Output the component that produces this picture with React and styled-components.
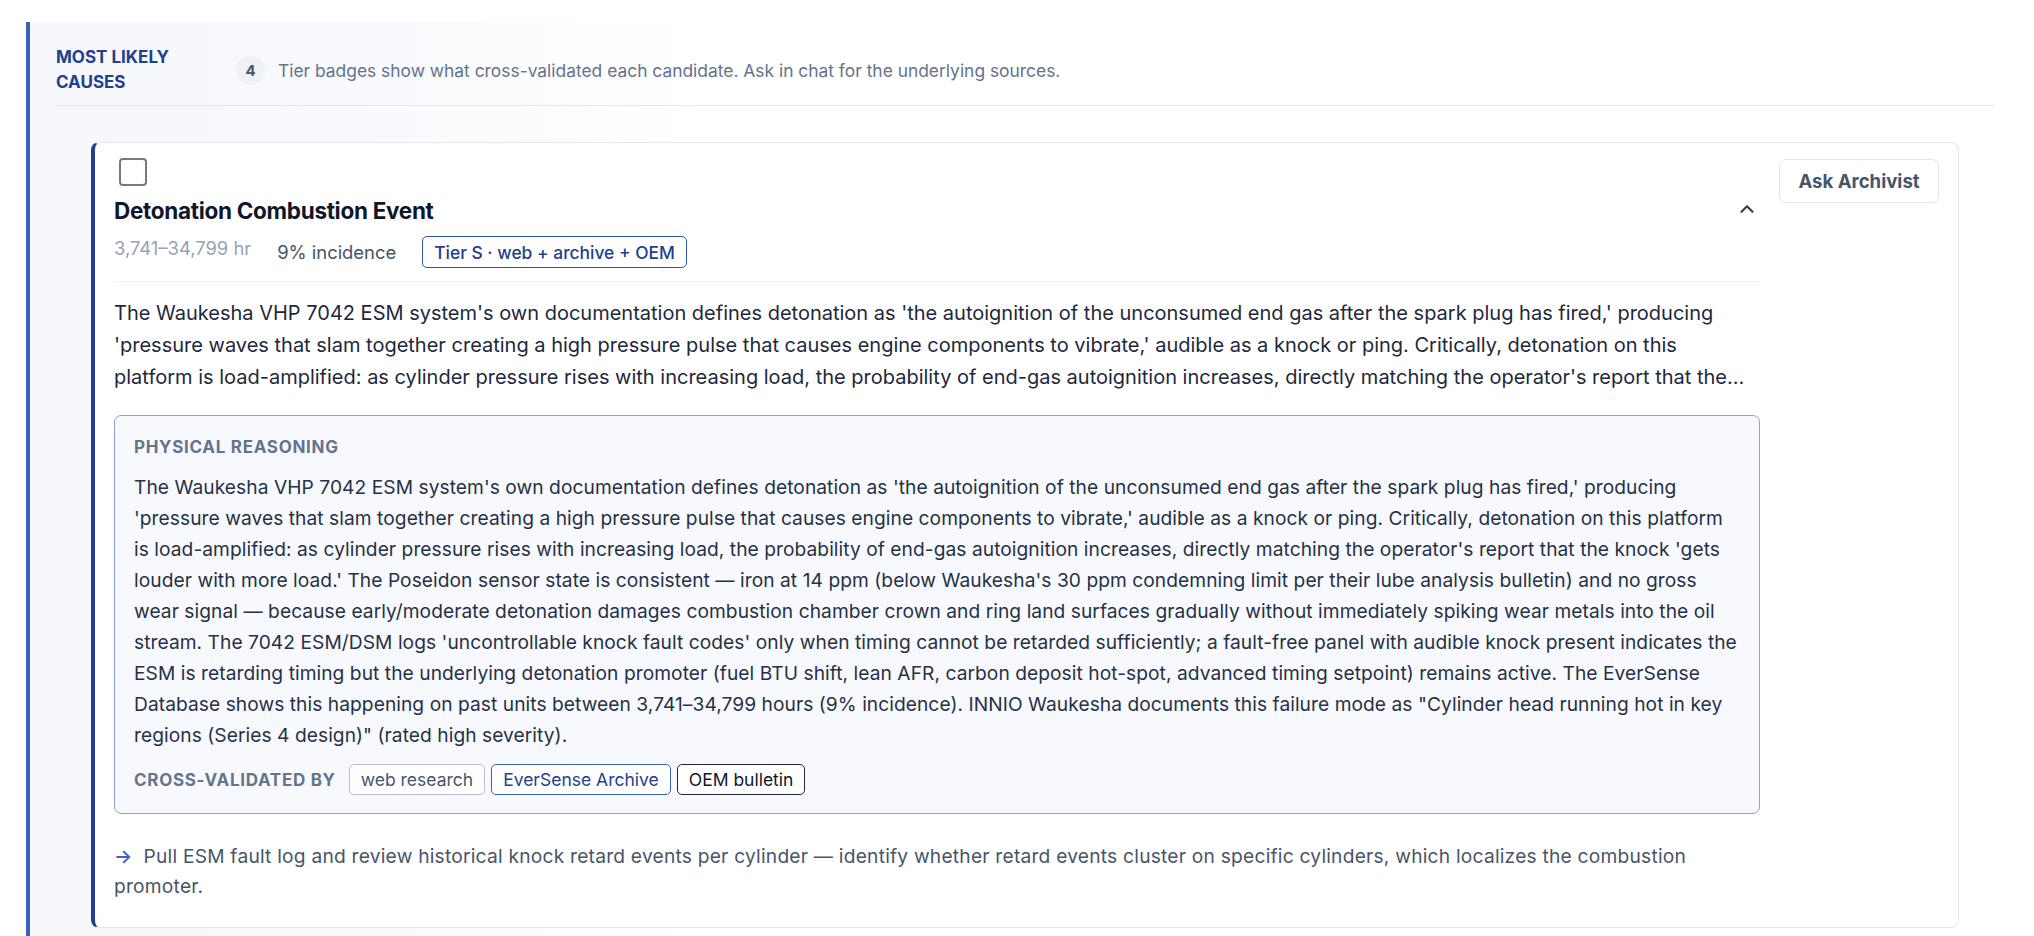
import React from "react";
import styled, { createGlobalStyle } from "styled-components";
import { ChevronUp } from "lucide-react";

const GlobalStyle = createGlobalStyle`
  * { box-sizing: border-box; }
  body {
    margin: 0;
    background: #ffffff;
    font-family: Inter, "Noto Sans", sans-serif;
    color: #1e293b;
  }
`;

const Page = styled.div`
  padding: 22px 14px 0 26px;
`;

const Panel = styled.section`
  border-left: 4px solid #3561c6;
  background: linear-gradient(90deg, #f5f7fb 0%, #f9fafd 18%, #ffffff 34%);
  padding: 23px 26px 24px 26px;
`;

const PanelHeader = styled.header`
  display: flex;
  align-items: center;
  padding-bottom: 10px;
  border-bottom: 1px solid #e4e7ec;
`;

const SectionLabel = styled.h2`
  width: 160px;
  margin: 0 20px 0 0;
  font-size: 17px;
  line-height: 25px;
  font-weight: 700;
  text-transform: uppercase;
  color: #22408f;
`;

const CountBubble = styled.span`
  width: 29px;
  height: 29px;
  border-radius: 50%;
  background: #eef1f6;
  color: #475569;
  font-size: 15px;
  font-weight: 700;
  display: inline-flex;
  align-items: center;
  justify-content: center;
  margin-right: 13px;
`;

const HeaderNote = styled.span`
  font-size: 17.4px;
  color: #64748b;
`;

const CauseList = styled.div`
  padding: 36px 35px 0 35px;
`;

const Card = styled.article`
  display: flex;
  gap: 19px;
  background: #ffffff;
  border: 1px solid #e5e7ee;
  border-left: 4px solid #223f94;
  border-radius: 8px;
  padding: 15px 19px 26px 19px;
`;

const Main = styled.div`
  flex: 1;
  min-width: 0;
`;

const Side = styled.div`
  flex: 0 0 160px;
`;

const Check = styled.input.attrs({ type: "checkbox" })`
  appearance: none;
  display: block;
  width: 28px;
  height: 28px;
  margin: 0 0 10px 5px;
  border: 2px solid #7a7a7a;
  border-radius: 4px;
  background: #ffffff;
`;

const TitleRow = styled.div`
  display: flex;
  align-items: flex-start;
  justify-content: space-between;
  padding-bottom: 13px;
  border-bottom: 1px solid #eef0f4;
`;

const Title = styled.h3`
  margin: 0;
  font-size: 22.5px;
  line-height: 30px;
  font-weight: 700;
  letter-spacing: -0.3px;
  color: #0f172a;
`;

const Toggle = styled.button`
  border: none;
  background: none;
  padding: 0;
  margin: 2px 2px 0 0;
  color: #334155;
  display: flex;
`;

const MetaRow = styled.div`
  display: flex;
  align-items: center;
  gap: 26px;
  margin-top: 10px;
`;

const Hours = styled.span`
  font-size: 18.4px;
  color: #94a3b8;
  padding-bottom: 9px;
`;

const Incidence = styled.span`
  font-size: 18.4px;
  color: #475569;
`;

const TierBadge = styled.span`
  display: inline-flex;
  align-items: center;
  height: 32px;
  padding: 0 11px;
  border: 1.5px solid #2f55b8;
  border-radius: 5px;
  font-size: 17.4px;
  font-weight: 500;
  color: #22408f;
`;

const Summary = styled.p`
  margin: 15px 0 0 0;
  font-size: 20px;
  line-height: 32px;
  color: #1e293b;
  display: -webkit-box;
  -webkit-line-clamp: 3;
  -webkit-box-orient: vertical;
  overflow: hidden;
`;

const Reasoning = styled.div`
  margin-top: 22px;
  border: 1.5px solid #86a0e0;
  border-radius: 7px;
  background: #f8f9fe;
  padding: 20px 19px 18px 19px;
`;

const SmallCaps = styled.span`
  font-size: 17px;
  font-weight: 700;
  letter-spacing: 0.7px;
  text-transform: uppercase;
  color: #64748b;
`;

const ReasoningLabel = styled(SmallCaps)`
  display: block;
  line-height: 22px;
  margin-bottom: 14px;
`;

const ReasoningText = styled.p`
  margin: 0;
  font-size: 19.2px;
  line-height: 31px;
  letter-spacing: 0.05px;
  color: #263244;
`;

const SourceRow = styled.div`
  display: flex;
  align-items: center;
  gap: 6px;
  margin-top: 13px;
`;

const SourceLabel = styled(SmallCaps)`
  margin-right: 7px;
`;

const sourceTone = {
  web: { border: "#b9bfca", color: "#475569" },
  archive: { border: "#3a62c4", color: "#22408f" },
  oem: { border: "#1e293b", color: "#0f172a" },
};

const SourceChip = styled.span`
  display: inline-flex;
  align-items: center;
  height: 31px;
  padding: 0 11px;
  background: #ffffff;
  border: 1.5px solid ${(p) => sourceTone[p.$tone].border};
  color: ${(p) => sourceTone[p.$tone].color};
  border-radius: 5px;
  font-size: 17.5px;
`;

const Action = styled.p`
  margin: 27px 0 0 0;
  font-size: 19.2px;
  line-height: 30px;
  letter-spacing: 0.22px;
  color: #475569;
`;

const Arrow = styled.span`
  color: #3a62c4;
  font-weight: 600;
  margin-right: 11px;
`;

const AskButton = styled.button`
  width: 160px;
  height: 44px;
  margin-top: 1px;
  border: 1px solid #e2e5ec;
  border-radius: 7px;
  background: #ffffff;
  font-family: inherit;
  font-size: 18.6px;
  font-weight: 700;
  color: #475569;
`;

const sources = [
  { tone: "web", label: "web research" },
  { tone: "archive", label: "EverSense Archive" },
  { tone: "oem", label: "OEM bulletin" },
];

const summary =
  "The Waukesha VHP 7042 ESM system's own documentation defines detonation as 'the autoignition of the unconsumed end gas after the spark plug has fired,' producing 'pressure waves that slam together creating a high pressure pulse that causes engine components to vibrate,' audible as a knock or ping. Critically, detonation on this platform is load-amplified: as cylinder pressure rises with increasing load, the probability of end-gas autoignition increases, directly matching the operator's report that the knock 'gets louder with more load.'";

const reasoning =
  "The Waukesha VHP 7042 ESM system's own documentation defines detonation as 'the autoignition of the unconsumed end gas after the spark plug has fired,' producing 'pressure waves that slam together creating a high pressure pulse that causes engine components to vibrate,' audible as a knock or ping. Critically, detonation on this platform is load-amplified: as cylinder pressure rises with increasing load, the probability of end-gas autoignition increases, directly matching the operator's report that the knock 'gets louder with more load.' The Poseidon sensor state is consistent \u2014 iron at 14 ppm (below Waukesha's 30 ppm condemning limit per their lube analysis bulletin) and no gross wear signal \u2014 because early/moderate detonation damages combustion chamber crown and ring land surfaces gradually without immediately spiking wear metals into the oil stream. The 7042 ESM/DSM logs 'uncontrollable knock fault codes' only when timing cannot be retarded sufficiently; a fault-free panel with audible knock present indicates the ESM is retarding timing but the underlying detonation promoter (fuel BTU shift, lean AFR, carbon deposit hot-spot, advanced timing setpoint) remains active. The EverSense Database shows this happening on past units between 3,741\u201334,799 hours (9% incidence). INNIO Waukesha documents this failure mode as \"Cylinder head running hot in key regions (Series 4 design)\" (rated high severity).";

export default function App() {
  return (
    <Page>
      <GlobalStyle />
      <Panel>
        <PanelHeader>
          <SectionLabel>Most likely causes</SectionLabel>
          <CountBubble>4</CountBubble>
          <HeaderNote>
            Tier badges show what cross-validated each candidate. Ask in chat for the underlying sources.
          </HeaderNote>
        </PanelHeader>

        <CauseList>
          <Card>
            <Main>
              <Check aria-label="Select cause" />
              <TitleRow>
                <div>
                  <Title>Detonation Combustion Event</Title>
                  <MetaRow>
                    <Hours>3,741–34,799 hr</Hours>
                    <Incidence>9% incidence</Incidence>
                    <TierBadge>Tier S · web + archive + OEM</TierBadge>
                  </MetaRow>
                </div>
                <Toggle aria-label="Collapse">
                  <ChevronUp size={22} strokeWidth={2.4} />
                </Toggle>
              </TitleRow>

              <Summary>{summary}</Summary>

              <Reasoning>
                <ReasoningLabel>Physical reasoning</ReasoningLabel>
                <ReasoningText>{reasoning}</ReasoningText>
                <SourceRow>
                  <SourceLabel>Cross-validated by</SourceLabel>
                  {sources.map((s) => (
                    <SourceChip key={s.tone} $tone={s.tone}>
                      {s.label}
                    </SourceChip>
                  ))}
                </SourceRow>
              </Reasoning>

              <Action>
                <Arrow>→</Arrow>
                Pull ESM fault log and review historical knock retard events per cylinder — identify whether retard events cluster on specific cylinders, which localizes the combustion promoter.
              </Action>
            </Main>
            <Side>
              <AskButton>Ask Archivist</AskButton>
            </Side>
          </Card>
        </CauseList>
      </Panel>
    </Page>
  );
}
